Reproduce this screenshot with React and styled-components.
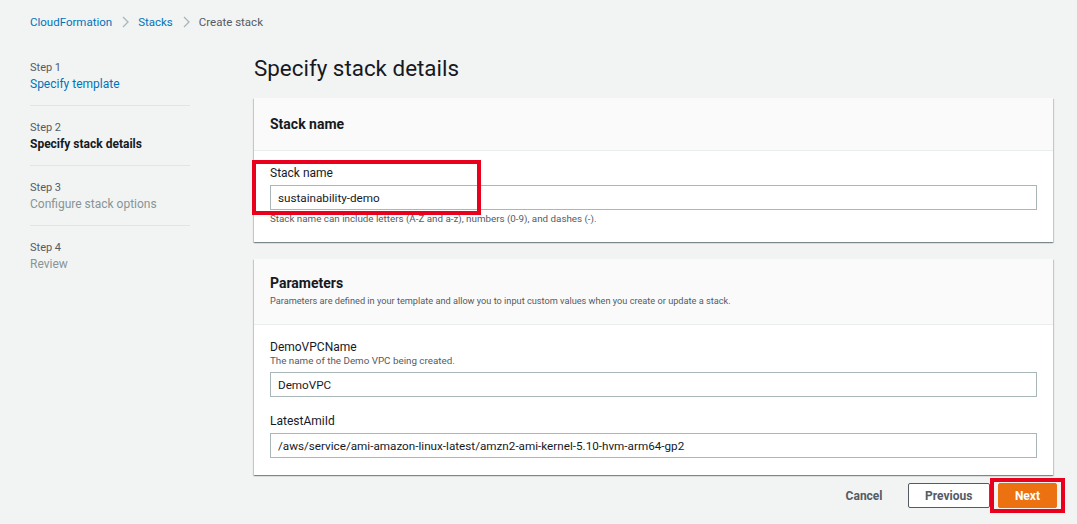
import React from 'react';
import styled, { createGlobalStyle } from 'styled-components';

const GlobalStyle = createGlobalStyle`
  html, body {
    margin: 0;
    padding: 0;
    background: #f2f3f3;
    font-family: Roboto, "Liberation Sans", sans-serif;
    color: #16191f;
  }
`;

const Page = styled.div`
  padding: 14px 24px 0 30px;
  min-height: 524px;
  box-sizing: border-box;
`;

const Breadcrumbs = styled.nav`
  display: flex;
  align-items: center;
  gap: 5px;
  font-size: 11.5px;
  line-height: 16px;
`;

const Crumb = styled.span`
  color: ${(p) => (p.$current ? '#545b64' : '#0073bb')};
`;

const Chevron = () => (
  <svg width="16" height="16" viewBox="0 0 16 16">
    <path d="M6 3l5 5-5 5" fill="none" stroke="#aab7b8" strokeWidth="1.3" />
  </svg>
);

const Layout = styled.div`
  display: grid;
  grid-template-columns: 160px 1fr;
  column-gap: 64px;
  margin-top: 24px;
`;

const Steps = styled.ol`
  list-style: none;
  margin: 0;
  padding: 0;
  padding-top: 6px;
`;

const StepItem = styled.li`
  padding: 0 0 13px;
  & + & {
    padding-top: 14px;
  }
  &:not(:last-child) {
    border-bottom: 1px solid #e1e4e4;
  }
`;

const StepLabel = styled.div`
  font-size: 11px;
  line-height: 16px;
  color: #545b64;
`;

const StepName = styled.div`
  font-size: 12px;
  line-height: 16px;
  color: ${(p) => (p.$state === 'done' ? '#0073bb' : p.$state === 'active' ? '#16191f' : '#879596')};
  font-weight: ${(p) => (p.$state === 'active' ? 700 : 400)};
`;

const Main = styled.main`
  display: flex;
  flex-direction: column;
`;

const Title = styled.h1`
  margin: 0 0 16px;
  font-size: 22.4px;
  line-height: 28px;
  font-weight: 400;
`;

const Card = styled.section`
  background: #fff;
  box-shadow: 0 1px 1px 0 rgba(0, 28, 36, 0.3), 1px 1px 1px 0 rgba(0, 28, 36, 0.15),
    -1px 1px 1px 0 rgba(0, 28, 36, 0.15);
  & + & {
    margin-top: 17px;
  }
`;

const CardHeader = styled.header`
  background: #fafafa;
  border-bottom: 1px solid #eaeded;
  padding: ${(p) => (p.$withDesc ? '14px 16px 16px' : '16px')};
`;

const CardTitle = styled.h2`
  margin: 0;
  font-size: 14px;
  line-height: 20px;
  font-weight: 700;
`;

const CardDesc = styled.p`
  margin: 1px 0 0;
  font-size: 9.2px;
  line-height: 14px;
  color: #545b64;
`;

const CardBody = styled.div`
  padding: 14px 16px 17px;
  display: flex;
  flex-direction: column;
  gap: 16px;
`;

const Field = styled.div`
  position: relative;
  display: flex;
  flex-direction: column;
`;

const Label = styled.label`
  font-size: 12px;
  line-height: 16px;
  color: #16191f;
`;

const FieldDesc = styled.div`
  font-size: 9.8px;
  line-height: 12px;
  color: #545b64;
  margin-bottom: 5px;
`;

const Input = styled.input`
  margin-top: ${(p) => (p.$flush ? '0' : '4px')};
  height: 25px;
  box-sizing: border-box;
  border: 1px solid #aab7b8;
  border-radius: 0;
  padding: 0 7px;
  font-family: inherit;
  font-size: 11.7px;
  color: #16191f;
  background: #fff;
  outline: none;
`;

const Hint = styled.div`
  margin-top: 3px;
  font-size: 9.8px;
  line-height: 12px;
  color: #545b64;
`;

const Highlight = styled.div`
  position: absolute;
  left: -18px;
  top: -5px;
  width: 229px;
  height: 55px;
  box-sizing: border-box;
  border: 4px solid #e8001c;
  pointer-events: none;
`;

const Footer = styled.div`
  display: flex;
  justify-content: flex-end;
  align-items: center;
  gap: 8px;
  margin-top: 8px;
  margin-right: -4px;
`;

const Button = styled.button`
  position: relative;
  height: 25px;
  padding: 0 ${(p) => (p.$variant === 'normal' ? '16.5px' : '16px')};
  font-family: inherit;
  font-size: 12px;
  font-weight: 700;
  border-radius: 2px;
  cursor: pointer;
  border: 1px solid
    ${(p) => (p.$variant === 'primary' ? '#ec7211' : p.$variant === 'normal' ? '#545b64' : 'transparent')};
  background: ${(p) => (p.$variant === 'primary' ? '#ec7211' : p.$variant === 'normal' ? '#fff' : 'transparent')};
  color: ${(p) => (p.$variant === 'primary' ? '#fff' : '#545b64')};

  ${(p) =>
    p.$marked &&
    `
    &::after {
      content: '';
      position: absolute;
      top: -6px;
      bottom: -6px;
      left: -9px;
      right: -9px;
      border: 4px solid #e8001c;
    }
  `}
`;

const steps = [
  { label: 'Step 1', name: 'Specify template', state: 'done' },
  { label: 'Step 2', name: 'Specify stack details', state: 'active' },
  { label: 'Step 3', name: 'Configure stack options', state: 'todo' },
  { label: 'Step 4', name: 'Review', state: 'todo' },
];

export default function App() {
  return (
    <>
      <GlobalStyle />
      <Page>
        <Breadcrumbs>
          <Crumb>CloudFormation</Crumb>
          <Chevron />
          <Crumb>Stacks</Crumb>
          <Chevron />
          <Crumb $current>Create stack</Crumb>
        </Breadcrumbs>
        <Layout>
          <Steps>
            {steps.map((s) => (
              <StepItem key={s.label}>
                <StepLabel>{s.label}</StepLabel>
                <StepName $state={s.state}>{s.name}</StepName>
              </StepItem>
            ))}
          </Steps>
          <Main>
            <Title>Specify stack details</Title>
            <Card>
              <CardHeader>
                <CardTitle>Stack name</CardTitle>
              </CardHeader>
              <CardBody>
                <Field>
                  <Label>Stack name</Label>
                  <Input defaultValue="sustainability-demo" />
                  <Hint>Stack name can include letters (A-Z and a-z), numbers (0-9), and dashes (-).</Hint>
                  <Highlight />
                </Field>
              </CardBody>
            </Card>
            <Card>
              <CardHeader $withDesc>
                <CardTitle>Parameters</CardTitle>
                <CardDesc>
                  Parameters are defined in your template and allow you to input custom values when you create or
                  update a stack.
                </CardDesc>
              </CardHeader>
              <CardBody>
                <Field>
                  <Label>DemoVPCName</Label>
                  <FieldDesc>The name of the Demo VPC being created.</FieldDesc>
                  <Input $flush defaultValue="DemoVPC" />
                </Field>
                <Field>
                  <Label>LatestAmiId</Label>
                  <Input defaultValue="/aws/service/ami-amazon-linux-latest/amzn2-ami-kernel-5.10-hvm-arm64-gp2" />
                </Field>
              </CardBody>
            </Card>
            <Footer>
              <Button $variant="link">Cancel</Button>
              <Button $variant="normal">Previous</Button>
              <Button $variant="primary" $marked>
                Next
              </Button>
            </Footer>
          </Main>
        </Layout>
      </Page>
    </>
  );
}
